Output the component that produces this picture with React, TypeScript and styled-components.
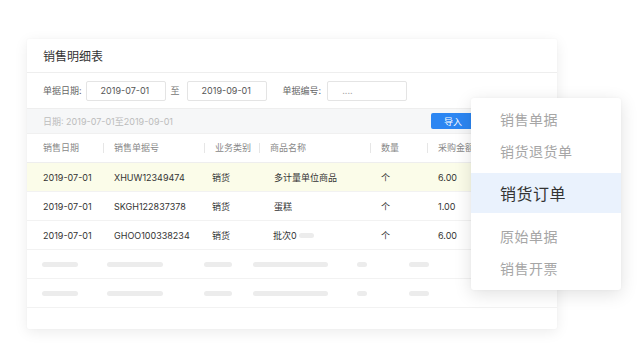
import React from "react";
import styled, { createGlobalStyle } from "styled-components";

const Global = createGlobalStyle`
  html, body { margin: 0; padding: 0; background: #fff; }
  body { font-family: Inter, "Noto Sans CJK SC", sans-serif; -webkit-font-smoothing: antialiased; }
  * { box-sizing: border-box; }
`;

const Page = styled.div`
  position: relative;
  width: 640px;
  height: 360px;
  padding: 39px 0 0 27px;
  overflow: hidden;
`;

const Card = styled.div`
  width: 530px;
  height: 290px;
  background: #fff;
  border-radius: 2px;
  box-shadow: 0 3px 14px rgba(0, 0, 0, 0.08), 0 0 2px rgba(0, 0, 0, 0.04);
  display: flex;
  flex-direction: column;
`;

const Title = styled.div`
  height: 34px;
  padding-left: 16px;
  display: flex;
  align-items: center;
  font-size: 12px;
  color: #333;
  border-bottom: 1px solid #eeeeee;
`;

const Filter = styled.div`
  height: 35px;
  padding-left: 16px;
  display: flex;
  align-items: center;
  font-size: 9px;
  color: #666;
`;

const Label = styled.span<{ $ml?: number; $mr?: number }>`
  margin-left: ${(p) => p.$ml ?? 0}px;
  margin-right: ${(p) => p.$mr ?? 4}px;
`;

const Input = styled.div<{ $muted?: boolean }>`
  width: 80px;
  height: 20px;
  border: 1px solid #e4e4e4;
  border-radius: 2px;
  display: flex;
  align-items: center;
  padding-left: 14px;
  color: ${(p) => (p.$muted ? "#aaa" : "#555")};
  font-size: 9px;
`;

const To = styled.span`
  margin: 0 7px 0 5px;
  color: #777;
`;

const InfoBar = styled.div`
  height: 26px;
  padding-left: 16px;
  display: flex;
  align-items: center;
  background: #f6f7f8;
  border-top: 1px solid #eeeeee;
  border-bottom: 1px solid #f0f0f0;
  font-size: 9px;
  color: #bcbcbc;
`;

const ImportBtn = styled.div`
  margin-left: auto;
  margin-right: 80px;
  width: 46px;
  height: 16px;
  background: #2c86f2;
  border-radius: 2px;
  color: #fff;
  font-size: 9px;
  display: flex;
  align-items: center;
  padding-left: 13px;
`;

const COLS = "76px 101px 55px 111px 57px 1fr";

const HeadRow = styled.div`
  display: grid;
  grid-template-columns: ${COLS};
  height: 29px;
  align-items: center;
  border-bottom: 1px solid #eeeeee;
  font-size: 9px;
  color: #888;
`;

const HeadCell = styled.div<{ $first?: boolean }>`
  padding-left: ${(p) => (p.$first ? 16 : 10)}px;
  white-space: nowrap;
  border-left: ${(p) => (p.$first ? "none" : "1px solid #e6e6e6")};
  line-height: 10px;
`;

const Row = styled.div<{ $hl?: boolean }>`
  display: grid;
  grid-template-columns: ${COLS};
  height: 29px;
  align-items: center;
  border-bottom: 1px solid #f2f2f2;
  background: ${(p) => (p.$hl ? "#fbfce9" : "#fff")};
  font-size: 9px;
  color: #333;
`;

const Cell = styled.div<{ $first?: boolean; $pl?: number }>`
  padding-left: ${(p) => (p.$first ? 16 : p.$pl ?? 11)}px;
  white-space: nowrap;
  display: flex;
  align-items: center;
`;

const SkelRow = styled.div`
  height: 29px;
  display: flex;
  align-items: center;
  padding-left: 15px;
  border-bottom: 1px solid #f2f2f2;
`;

const Bar = styled.span<{ $w: number; $ml?: number }>`
  display: inline-block;
  width: ${(p) => p.$w}px;
  height: 5px;
  border-radius: 3px;
  background: #ececec;
  margin-left: ${(p) => p.$ml ?? 0}px;
`;

const Menu = styled.div`
  position: absolute;
  left: 471px;
  top: 98px;
  width: 150px;
  height: 192px;
  background: #fff;
  border-radius: 3px;
  box-shadow: 0 4px 18px rgba(0, 0, 0, 0.12), 0 0 3px rgba(0, 0, 0, 0.04);
  padding: 5px 0 6px;
  display: flex;
  flex-direction: column;
`;

const MenuItem = styled.div<{ $active?: boolean }>`
  height: ${(p) => (p.$active ? 40 : 32)}px;
  margin: ${(p) => (p.$active ? "6px 0 7px" : "0")};
  padding-left: 29px;
  display: flex;
  align-items: center;
  font-size: ${(p) => (p.$active ? 16 : 14)}px;
  color: ${(p) => (p.$active ? "#333" : "#a6a6a6")};
  background: ${(p) => (p.$active ? "#eaf2fd" : "transparent")};
  letter-spacing: 0.5px;
`;

const rows = [
  { date: "2019-07-01", no: "XHUW12349474", type: "销货", name: "多计量单位商品", unit: "个", amt: "6.00", hl: true },
  { date: "2019-07-01", no: "SKGH122837378", type: "销货", name: "蛋糕", unit: "个", amt: "1.00" },
  { date: "2019-07-01", no: "GHOO100338234", type: "销货", name: "批次0", unit: "个", amt: "6.00", tail: true },
];

const skel: [number, number][] = [
  [36, 0],
  [56, 29],
  [28, 41],
  [75, 21],
  [10, 29],
  [20, 42],
];

export default function App() {
  return (
    <>
      <Global />
      <Page>
        <Card>
          <Title>销售明细表</Title>
          <Filter>
            <Label>单据日期:</Label>
            <Input>2019-07-01</Input>
            <To>至</To>
            <Input>2019-09-01</Input>
            <Label $ml={16} $mr={6}>单据编号:</Label>
            <Input $muted>....</Input>
          </Filter>
          <InfoBar>
            日期: 2019-07-01至2019-09-01
            <ImportBtn>导入</ImportBtn>
          </InfoBar>
          <HeadRow>
            <HeadCell $first>销售日期</HeadCell>
            <HeadCell>销售单据号</HeadCell>
            <HeadCell>业务类别</HeadCell>
            <HeadCell>商品名称</HeadCell>
            <HeadCell>数量</HeadCell>
            <HeadCell>采购金额</HeadCell>
          </HeadRow>
          {rows.map((r, i) => (
            <Row key={i} $hl={r.hl}>
              <Cell $first>{r.date}</Cell>
              <Cell>{r.no}</Cell>
              <Cell $pl={8}>{r.type}</Cell>
              <Cell $pl={r.tail ? 14 : 15}>
                {r.name}
                {r.tail && <Bar $w={15} $ml={2} />}
              </Cell>
              <Cell>{r.unit}</Cell>
              <Cell>{r.amt}</Cell>
            </Row>
          ))}
          {[0, 1].map((k) => (
            <SkelRow key={k}>
              {skel.map(([w, ml], j) => (
                <Bar key={j} $w={w} $ml={ml} />
              ))}
            </SkelRow>
          ))}
        </Card>
        <Menu>
          <MenuItem>销售单据</MenuItem>
          <MenuItem>销货退货单</MenuItem>
          <MenuItem $active>销货订单</MenuItem>
          <MenuItem>原始单据</MenuItem>
          <MenuItem>销售开票</MenuItem>
        </Menu>
      </Page>
    </>
  );
}
